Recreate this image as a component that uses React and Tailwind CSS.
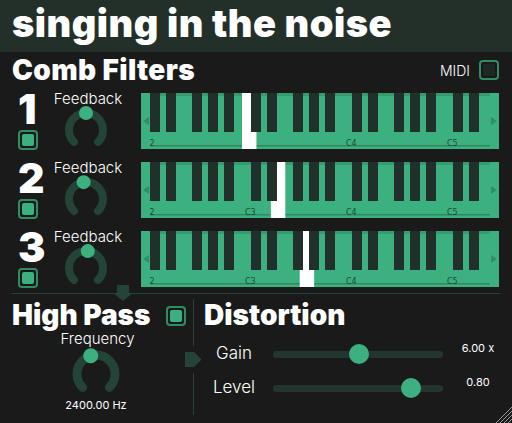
import React from "react";

const GREEN = "#3cb17f";
const ARC = "#234437";

function pt(cx, cy, r, a) {
  const rad = (a * Math.PI) / 180;
  return [cx + r * Math.sin(rad), cy - r * Math.cos(rad)];
}

function Knob({ w, h, cx, cy, r, sw, tr, angle }) {
  const [x1, y1] = pt(cx, cy, r, -135);
  const [x2, y2] = pt(cx, cy, r, 135);
  const [tx, ty] = pt(cx, cy, r, angle);
  return (
    <svg width={w} height={h} viewBox={`0 0 ${w} ${h}`} className="block">
      <path
        d={`M ${x1} ${y1} A ${r} ${r} 0 1 1 ${x2} ${y2}`}
        fill="none"
        stroke={ARC}
        strokeWidth={sw}
        strokeLinecap="round"
      />
      <circle cx={tx} cy={ty} r={tr} fill={GREEN} />
    </svg>
  );
}

function Check({ on = true }) {
  return (
    <div className="w-[20px] h-[20px] rounded-[4px] border-2 border-[#2f8c64] p-[2px] bg-[#1a1a1a] shrink-0">
      <div className={`w-full h-full rounded-[2px] ${on ? "bg-[#3cb17f]" : "bg-[#1e2925]"}`} />
    </div>
  );
}

const BLACK_OFFS = [8, 24, 50, 66, 82];

function Keyboard({ hl, labels }) {
  const W = 358;
  const H = 56;
  const wk = 101 / 7;
  const blacks = [];
  for (let o = 0; o < 4; o++) {
    BLACK_OFFS.forEach((b) => {
      const x = o * 101 + b + 1;
      if (x < 345) blacks.push(x);
    });
  }
  return (
    <svg width={W} height={H} viewBox={`0 0 ${W} ${H}`} className="block">
      <rect x="0" y="0" width={W} height={H} fill={GREEN} />
      <rect x="0" y="0" width={W} height="3" fill="#2f8f66" opacity="0.6" />
      <rect x="9" y="52" width="340" height="1.5" fill="#2e8a63" />
      {labels.map((l) => (
        <text
          key={l.t}
          x={l.x}
          y="53"
          fontSize="8"
          fill="#1f4a38"
          fontFamily="'DejaVu Sans', sans-serif"
        >
          {l.t}
        </text>
      ))}
      <rect x={101 + hl * wk} y="0" width={wk} height={H} fill="#ffffff" />
      {blacks.map((x) => (
        <rect key={x} x={x} y="0" width="10" height="39" fill="#22302b" />
      ))}
      <rect x="0" y="0" width="9" height={H} fill={GREEN} />
      <rect x="349" y="0" width="9" height={H} fill={GREEN} />
      <path d="M2 28 L8 24 L8 32 Z" fill="#2f8f66" />
      <path d="M356 28 L350 24 L350 32 Z" fill="#2f8f66" />
    </svg>
  );
}

const ROWS = [
  { n: "1", hl: 0, a: 0, h: "h-[69px]", labels: [{ t: "C2", x: 3 }, { t: "C4", x: 205 }, { t: "C5", x: 306 }] },
  { n: "2", hl: 2, a: -8, h: "h-[69px]", labels: [{ t: "C2", x: 3 }, { t: "C3", x: 104 }, { t: "C4", x: 205 }, { t: "C5", x: 306 }] },
  { n: "3", hl: 4, a: 6, h: "h-[67px]", labels: [{ t: "C2", x: 3 }, { t: "C3", x: 104 }, { t: "C4", x: 205 }, { t: "C5", x: 306 }] },
];

function Slider({ pos }) {
  return (
    <div className="relative w-[170px] h-[20px] flex items-center">
      <div className="w-full h-[7px] rounded-full bg-[#24352f]" />
      <div
        className="absolute w-[20px] h-[20px] rounded-full bg-[#3cb17f]"
        style={{ left: pos - 10 }}
      />
    </div>
  );
}

export default function App() {
  return (
    <div
      className="relative w-[512px] h-[423px] bg-[#1a1a1a] overflow-hidden flex flex-col text-white"
      style={{ fontFamily: "Inter, 'Liberation Sans', sans-serif" }}
    >
      <div className="h-[52px] bg-[#233029] pl-[12px] flex items-center shrink-0">
        <div className="text-[38px] font-black leading-none tracking-[0.5px] -mt-[6px]">
          singing in the noise
        </div>
      </div>

      <div className="h-[36px] pl-[12px] pr-[13px] flex items-center justify-between shrink-0">
        <div className="text-[28px] font-black leading-none tracking-[0.4px]">Comb Filters</div>
        <div className="flex items-center gap-[9px]">
          <span className="text-[14px] font-light">MIDI</span>
          <Check on={false} />
        </div>
      </div>

      {ROWS.map((row) => (
        <div key={row.n} className={`${row.h} flex items-start shrink-0`}>
          <div className="w-[46px] pl-[18px] flex flex-col">
            <div className="text-[41px] font-black leading-none h-[42px] pt-[1px]">{row.n}</div>
            <Check />
          </div>
          <div className="w-[84px] flex flex-col items-center">
            <div className="text-[15px] font-light leading-none mt-[3px]">Feedback</div>
            <div className="-mt-[2px] pr-[4px]">
              <Knob w={48} h={44} cx={24} cy={26} r={17} sw={8} tr={7} angle={row.a} />
            </div>
          </div>
          <div className="mt-[5px] ml-[11px]">
            <Keyboard hl={row.hl} labels={row.labels} />
          </div>
        </div>
      ))}

      <div className="relative mx-[12px] border-t border-[#24443a] flex flex-1 min-h-0">
        <svg className="absolute left-[101px] -top-[9px]" width="20" height="16" viewBox="0 0 20 16">
          <path d="M4 0 H16 V8 H20 L10 16 L0 8 H4 Z" fill="#24443a" />
        </svg>
        <div className="w-[181px] flex flex-col">
          <div className="flex items-center pt-[7px]">
            <div className="text-[28px] font-black leading-none h-[27px]">High Pass</div>
            <div className="ml-[15px] mt-[2px]">
              <Check />
            </div>
          </div>
          <div className="w-[168px] flex flex-col items-center">
            <div className="text-[15px] font-light leading-none pl-[3px] mt-[3px]">Frequency</div>
            <Knob w={52} h={48} cx={26} cy={28} r={19} sw={9} tr={7.5} angle={-16} />
            <div className="text-[11px] leading-none mt-[6px]">2400.00 Hz</div>
          </div>
        </div>
        <div className="relative w-[1px] bg-[#24443a] mt-[5px] mb-[8px]">
          <svg className="absolute -left-[8px] top-[47px]" width="18" height="27" viewBox="0 0 18 27">
            <rect x="0" y="0" width="18" height="27" fill="#1a1a1a" />
            <path d="M0 6 H9 L16.5 13.5 L9 21 H0 Z" fill="#24443a" />
          </svg>
        </div>
        <div className="flex-1 flex flex-col pl-[10px]">
          <div className="text-[28px] font-black leading-none pt-[7px]">Distortion</div>
          <div className="h-[24px] flex items-center mt-[13px]">
            <span className="w-[60px] text-center text-[17px] font-light">Gain</span>
            <div className="ml-[9px]">
              <Slider pos={86} />
            </div>
            <span className="w-[40px] text-center text-[11px] ml-[15px] -mt-[12px]">6.00 x</span>
          </div>
          <div className="h-[24px] flex items-center mt-[10px]">
            <span className="w-[60px] text-center text-[17px] font-light">Level</span>
            <div className="ml-[9px]">
              <Slider pos={138} />
            </div>
            <span className="w-[40px] text-center text-[11px] ml-[15px] -mt-[12px]">0.80</span>
          </div>
        </div>
      </div>

      <svg className="absolute left-[492px] top-[403px]" width="20" height="20" viewBox="0 0 20 20">
        {[4, 8, 12, 16].map((d) => (
          <line key={d} x1={20 - d} y1="20" x2="20" y2={20 - d} stroke="#9a9a9a" strokeWidth="1" />
        ))}
      </svg>
    </div>
  );
}
